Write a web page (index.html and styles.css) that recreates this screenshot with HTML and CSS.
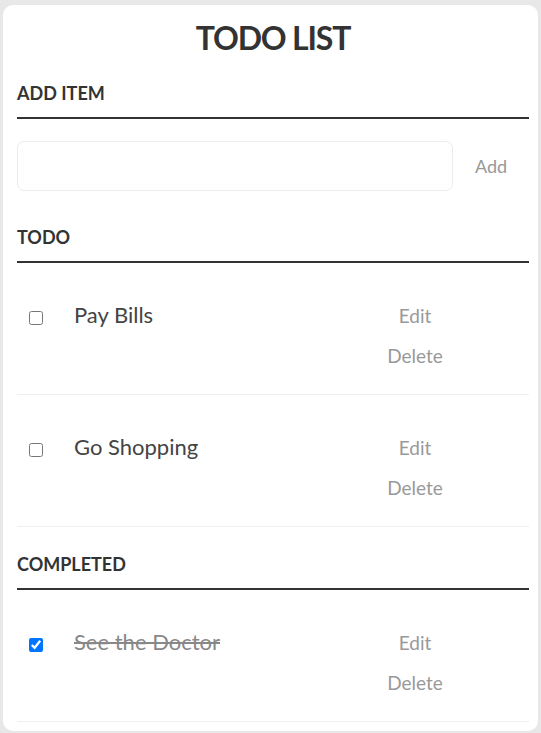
FILE: index.html
```html
<!DOCTYPE html>
<html lang="en">
<head>
<meta charset="utf-8">
<title>Todo List</title>
<link rel="stylesheet" href="styles.css">
</head>
<body>
<main class="card">
  <h1 class="title">TODO LIST</h1>

  <h3 class="section-head">ADD ITEM</h3>
  <div class="add-row">
    <input class="new-task" type="text">
    <button class="btn add-btn">Add</button>
  </div>

  <h3 class="section-head section-todo">TODO</h3>
  <ul class="tasks">
    <li class="task">
      <input class="check" type="checkbox">
      <span class="task-label">Pay Bills</span>
      <div class="actions">
        <button class="btn">Edit</button>
        <button class="btn">Delete</button>
      </div>
    </li>
    <li class="task">
      <input class="check" type="checkbox">
      <span class="task-label">Go Shopping</span>
      <div class="actions">
        <button class="btn">Edit</button>
        <button class="btn">Delete</button>
      </div>
    </li>
  </ul>

  <h3 class="section-head">COMPLETED</h3>
  <ul class="tasks">
    <li class="task done">
      <input class="check" type="checkbox" checked>
      <span class="task-label">See the Doctor</span>
      <div class="actions">
        <button class="btn">Edit</button>
        <button class="btn">Delete</button>
      </div>
    </li>
  </ul>
</main>
</body>
</html>
```

FILE: styles.css
```css
* {
  box-sizing: border-box;
}

html, body {
  margin: 0;
  padding: 0;
}

body {
  background: #e8e8e8;
  font-family: Lato, "Open Sans", "Liberation Sans", sans-serif;
  color: #333;
  padding: 5px 3px 3px 3px;
  min-height: 733px;
}

.card {
  background: #fff;
  border-radius: 10px;
  padding: 13px 9px 9px 14px;
}

.title {
  margin: 0;
  font-size: 32px;
  line-height: 40px;
  font-weight: 700;
  letter-spacing: -1.2px;
  text-align: center;
  color: #333;
}

.section-head {
  margin: 26px 0 0 0;
  font-size: 18px;
  line-height: 22px;
  font-weight: 700;
  color: #333;
  padding-bottom: 13px;
  border-bottom: 2px solid #333;
}

.title + .section-head {
  margin-top: 24px;
}

.section-todo {
  margin-top: 35px;
}

.add-row {
  display: flex;
  align-items: center;
  margin-top: 22px;
}

.new-task {
  flex: 1;
  height: 50px;
  border: 1px solid #ececec;
  border-radius: 7px;
  font-family: inherit;
  font-size: 18px;
  padding: 0 12px;
  outline: none;
}

.btn {
  background: transparent;
  border: none;
  font-family: inherit;
  font-size: 19px;
  line-height: 24px;
  padding: 8px 10px;
  color: #999;
  cursor: pointer;
}

.add-btn {
  width: 76px;
  padding: 8px 0;
  font-size: 18px;
}

.tasks {
  list-style: none;
  margin: 0;
  padding: 0;
}

.task {
  display: flex;
  align-items: flex-start;
  padding: 33px 0 18px 0;
  border-bottom: 1px solid #efefef;
}

.check {
  margin: 15px 31px 0 12px;
  width: 14px;
  height: 14px;
  flex: none;
}

.task-label {
  flex: 1;
  padding-top: 7px;
  font-size: 22px;
  line-height: 24px;
  color: #444;
}

.done .task-label {
  color: #888;
  text-decoration: line-through;
}

.actions {
  width: 100px;
  margin-right: 64px;
  display: flex;
  flex-direction: column;
  align-items: center;
}
```
